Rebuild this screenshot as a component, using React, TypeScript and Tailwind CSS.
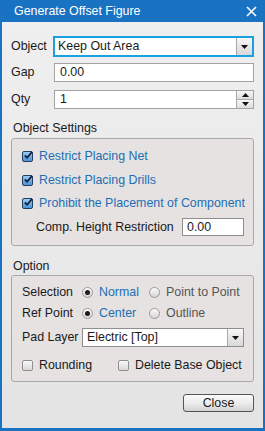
import React from "react";

const font = { fontFamily: '"Liberation Sans", Arial, sans-serif' };

function Check({ checked }: { checked?: boolean }) {
  return (
    <span className={`inline-flex h-[11px] w-[11px] shrink-0 items-center justify-center rounded-[2px] border ${checked ? "border-[#1f3f66] bg-gradient-to-b from-[#9ccbf2] to-[#4d93d6]" : "border-[#8f8f8f] bg-gradient-to-b from-[#fafafa] to-[#d9d9d9]"}`}>
      {checked && (
        <svg width="11" height="11" viewBox="0 0 11 11" className="-mt-[2px] -mr-[1px]">
          <path d="M2 5.5 L4.5 8 L10 1.5" fill="none" stroke="#0f2238" strokeWidth="2" />
        </svg>
      )}
    </span>
  );
}

function Radio({ checked }: { checked?: boolean }) {
  return (
    <span className="inline-flex h-[11px] w-[11px] shrink-0 items-center justify-center rounded-full border border-[#9a9a9a] bg-gradient-to-b from-[#fbfbfb] to-[#d4d4d4]">
      {checked && <span className="h-[5px] w-[5px] rounded-full bg-[#1b1b1b]" />}
    </span>
  );
}

function Arrow() {
  return (
    <span className="flex w-[16px] items-center justify-center border-l border-[#a9a9a9] bg-gradient-to-b from-[#f7f7f7] to-[#d8d8d8]">
      <svg width="7" height="4" viewBox="0 0 7 4">
        <path d="M0 0 H7 L3.5 4 Z" fill="#111" />
      </svg>
    </span>
  );
}

export default function App() {
  return (
    <div style={font} className="flex h-[431px] w-[265px] flex-col border-x-2 border-b-[3px] border-[#1a72c2] bg-[#ececec] text-[12.4px] leading-[15px] text-[#1a1a1a]">
      <div className="flex h-[22px] shrink-0 items-center justify-between bg-[#1a72c2] pl-[12px] pr-[6px] text-white">
        <span className="text-[12.4px]">Generate Offset Figure</span>
        <svg width="11" height="11" viewBox="0 0 11 11">
          <path d="M1 1 L10 10 M10 1 L1 10" stroke="white" strokeWidth="1.6" />
        </svg>
      </div>

      <div className="flex flex-1 flex-col bg-gradient-to-b from-[#efefef] to-[#e4e4e4] px-[9px] pt-[14px]">
        <div className="flex items-center">
          <span className="w-[42px]">Object</span>
          <div className="flex h-[21px] w-[201px] border-2 border-[#1ba1e2] bg-white">
            <span className="flex flex-1 items-center pl-[3px]">Keep Out Area</span>
            <Arrow />
          </div>
        </div>
        <div className="mt-[6px] flex items-center">
          <span className="w-[43px]">Gap</span>
          <div className="flex h-[19px] w-[200px] items-center border border-[#a3a3a3] bg-white pl-[5px]">0.00</div>
        </div>
        <div className="mt-[8px] flex items-center">
          <span className="w-[43px]">Qty</span>
          <div className="flex h-[19px] w-[200px] border border-[#a3a3a3] bg-white">
            <span className="flex flex-1 items-center pl-[5px]">1</span>
            <div className="flex w-[17px] flex-col border-l border-[#a9a9a9]">
              <span className="flex flex-1 items-center justify-center border-b border-[#a9a9a9] bg-gradient-to-b from-[#f7f7f7] to-[#dcdcdc]">
                <svg width="7" height="4" viewBox="0 0 7 4"><path d="M0 4 H7 L3.5 0 Z" fill="#111" /></svg>
              </span>
              <span className="flex flex-1 items-center justify-center bg-gradient-to-b from-[#f7f7f7] to-[#dcdcdc]">
                <svg width="7" height="4" viewBox="0 0 7 4"><path d="M0 0 H7 L3.5 4 Z" fill="#111" /></svg>
              </span>
            </div>
          </div>
        </div>

        <div className="mt-[12px] pl-[2px]">Object Settings</div>
        <div className="mt-[2px] flex flex-col rounded-[3px] border border-[#a8a8a8] bg-[#e6e2e2] pb-[9px] pl-[10px] pt-[10px]">
          {["Restrict Placing Net", "Restrict Placing Drills", "Prohibit the Placement of Component"].map((t, i) => (
            <div key={t} className={`flex h-[14px] items-center gap-[6px] ${i === 1 ? "mt-[10px]" : i === 2 ? "mt-[9px]" : ""}`}>
              <Check checked />
              <span className="text-[#1c6fb5]">{t}</span>
            </div>
          ))}
          <div className="mt-[8px] flex h-[18px] items-center pl-[14px]">
            <span className="w-[146px]">Comp. Height Restriction</span>
            <div className="flex h-[18px] w-[62px] items-center border border-[#8e8e8e] bg-white pl-[4px]">0.00</div>
          </div>
        </div>

        <div className="mt-[13px] pl-[2px]">Option</div>
        <div className="mt-[1px] flex flex-col rounded-[3px] border border-[#a8a8a8] bg-[#e6e2e2] pb-[9px] pl-[10px] pt-[9px]">
          <div className="flex h-[14px] items-center">
            <span className="w-[60px]">Selection</span>
            <Radio checked />
            <span className="ml-[6px] w-[50px] text-[#1c6fb5]">Normal</span>
            <Radio />
            <span className="ml-[6px] text-[#555]">Point to Point</span>
          </div>
          <div className="mt-[7px] flex h-[14px] items-center">
            <span className="w-[60px]">Ref Point</span>
            <Radio checked />
            <span className="ml-[6px] w-[50px] text-[#1c6fb5]">Center</span>
            <Radio />
            <span className="ml-[6px] text-[#555]">Outline</span>
          </div>
          <div className="mt-[8px] flex items-center">
            <span className="w-[60px]">Pad Layer</span>
            <div className="flex h-[19px] w-[162px] border border-[#8e8e8e] bg-white">
              <span className="flex flex-1 items-center pl-[4px]">Electric [Top]</span>
              <Arrow />
            </div>
          </div>
          <div className="mt-[11px] flex h-[14px] items-center">
            <Check />
            <span className="ml-[6px] w-[79px]">Rounding</span>
            <Check />
            <span className="ml-[6px]">Delete Base Object</span>
          </div>
        </div>

        <div className="mt-[12px] flex justify-end">
          <button className="flex h-[18px] w-[71px] items-center justify-center rounded-[3px] border border-[#555] bg-gradient-to-b from-[#fbfbfb] via-[#ececec] to-[#d2d2d2]">
            Close
          </button>
        </div>
      </div>
    </div>
  );
}
